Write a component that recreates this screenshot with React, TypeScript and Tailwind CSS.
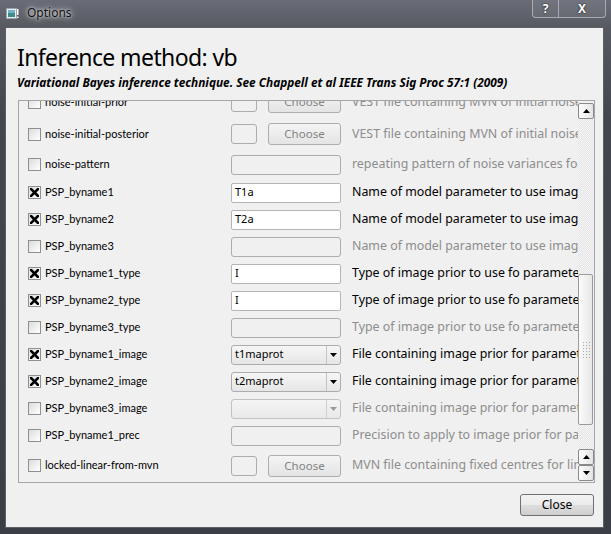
import React from "react";

type Ctrl = "choose" | "input" | "combo";
type Row = {
  label: string;
  checked: boolean;
  ctrl: Ctrl;
  value?: string;
  desc: string;
  enabled: boolean;
  h: string;
};

const rows: Row[] = [
  { label: "noise-initial-prior", checked: false, ctrl: "choose", desc: "VEST file containing MVN of initial noise prior", enabled: false, h: "h-[32px]" },
  { label: "noise-initial-posterior", checked: false, ctrl: "choose", desc: "VEST file containing MVN of initial noise posterior", enabled: false, h: "h-[32px]" },
  { label: "noise-pattern", checked: false, ctrl: "input", desc: "repeating pattern of noise variances for each point", enabled: false, h: "h-[29px]" },
  { label: "PSP_byname1", checked: true, ctrl: "input", value: "T1a", desc: "Name of model parameter to use image prior", enabled: true, h: "h-[27px]" },
  { label: "PSP_byname2", checked: true, ctrl: "input", value: "T2a", desc: "Name of model parameter to use image prior", enabled: true, h: "h-[27px]" },
  { label: "PSP_byname3", checked: false, ctrl: "input", desc: "Name of model parameter to use image prior", enabled: false, h: "h-[27px]" },
  { label: "PSP_byname1_type", checked: true, ctrl: "input", value: "I", desc: "Type of image prior to use fo parameter 1", enabled: true, h: "h-[27px]" },
  { label: "PSP_byname2_type", checked: true, ctrl: "input", value: "I", desc: "Type of image prior to use fo parameter 2", enabled: true, h: "h-[27px]" },
  { label: "PSP_byname3_type", checked: false, ctrl: "input", desc: "Type of image prior to use fo parameter 3", enabled: false, h: "h-[27px]" },
  { label: "PSP_byname1_image", checked: true, ctrl: "combo", value: "t1maprot", desc: "File containing image prior for parameter 1", enabled: true, h: "h-[27px]" },
  { label: "PSP_byname2_image", checked: true, ctrl: "combo", value: "t2maprot", desc: "File containing image prior for parameter 2", enabled: true, h: "h-[27px]" },
  { label: "PSP_byname3_image", checked: false, ctrl: "combo", desc: "File containing image prior for parameter 3", enabled: false, h: "h-[27px]" },
  { label: "PSP_byname1_prec", checked: false, ctrl: "input", desc: "Precision to apply to image prior for parameter 1", enabled: false, h: "h-[27px]" },
  { label: "locked-linear-from-mvn", checked: false, ctrl: "choose", desc: "MVN file containing fixed centres for linear regressors", enabled: false, h: "h-[33px]" },
];

function Check({ checked }: { checked: boolean }) {
  return (
    <span className="w-[13px] h-[13px] shrink-0 border border-[#8e8f8f] bg-[linear-gradient(135deg,#dcdcdc,#ffffff)] flex items-center justify-center">
      {checked && (
        <svg width="9" height="9" viewBox="0 0 9 9">
          <path d="M1 1L8 8M8 1L1 8" stroke="#000" strokeWidth="2.6" strokeLinecap="square" />
        </svg>
      )}
    </span>
  );
}

function Tri({ color = "#000", up = false }: { color?: string; up?: boolean }) {
  return (
    <svg width="7" height="4" viewBox="0 0 7 4">
      <path d={up ? "M0 4H7L3.5 0Z" : "M0 0H7L3.5 4Z"} fill={color} />
    </svg>
  );
}

function Control({ row }: { row: Row }) {
  if (row.ctrl === "choose") {
    return (
      <div className="w-[110px] flex items-center">
        <div className="w-[26px] h-[20px] rounded-[3px] border border-[#adadad] bg-[#f0f0f0]" />
        <div className="ml-[11px] w-[73px] h-[22px] rounded-[3px] border border-[#adadad] bg-[linear-gradient(#f4f4f4,#e4e4e4)] flex items-center justify-center text-[#838383] text-[11.5px]">
          Choose
        </div>
      </div>
    );
  }
  if (row.ctrl === "combo") {
    return (
      <div
        className={
          row.enabled
            ? "w-[110px] h-[20px] rounded-[3px] border border-[#acacac] bg-[linear-gradient(#f6f6f6,#e6e6e6)] flex items-center text-black text-[11px]"
            : "w-[110px] h-[20px] rounded-[3px] border border-[#c2c2c2] bg-[linear-gradient(#f4f4f4,#e9e9e9)] flex items-center text-black text-[11px]"
        }
      >
        <span className="flex-1 pl-[3px]">{row.value ?? ""}</span>
        <span
          className={
            row.enabled
              ? "w-[14px] h-full border-l border-[#c4c4c4] flex items-center justify-center"
              : "w-[14px] h-full border-l border-[#d0d0d0] flex items-center justify-center"
          }
        >
          <Tri color={row.enabled ? "#000" : "#9a9a9a"} />
        </span>
      </div>
    );
  }
  return row.enabled ? (
    <div className="w-[110px] h-[20px] rounded-[2px] border border-[#b5b5b5] bg-white flex items-center pl-[3px] text-black text-[11px]">
      {row.value}
    </div>
  ) : (
    <div className="w-[110px] h-[20px] rounded-[3px] border border-[#adadad] bg-[#f0f0f0]" />
  );
}

function ScrollBtn({ up }: { up: boolean }) {
  return (
    <div className="w-[16px] h-[16px] shrink-0 rounded-[2px] border border-[#8a8a8a] bg-[linear-gradient(90deg,#fdfdfd,#e4e4e4)] flex items-center justify-center">
      <Tri up={up} />
    </div>
  );
}

function Track({ h }: { h: string }) {
  return (
    <div
      className={`${h} w-[16px] bg-[image:repeating-conic-gradient(#f7f7f7_0%_25%,#e3e3e3_0%_50%)] bg-[length:2px_2px]`}
    />
  );
}

export default function App() {
  return (
    <div
      className="w-[611px] h-[534px] overflow-hidden flex flex-col bg-[linear-gradient(180deg,#6a6d78_0px,#56595f_28px,#43464c_120px,#3b3e44_534px)]"
      style={{ fontFamily: "'Noto Sans', sans-serif" }}
    >
      {/* Title bar */}
      <div className="h-[27px] shrink-0 flex items-start pl-[6px] pr-[5px]">
        <div className="mt-[7px] flex items-center">
          <svg width="13" height="11" viewBox="0 0 13 11">
            <rect x="0.5" y="0.5" width="10" height="10" fill="#e8eef2" stroke="#9aa4aa" />
            <rect x="2" y="2" width="7" height="7" fill="#3d8c8a" />
            <rect x="2" y="2" width="7" height="3" fill="#6fb2c9" />
            <rect x="11" y="1" width="1.5" height="6" fill="#ffffff" />
            <rect x="11" y="8.5" width="1.5" height="1.5" fill="#ffffff" />
          </svg>
          <span className="ml-[8px] text-[12px] leading-[12px] text-[#111] [text-shadow:0_0_6px_rgba(255,255,255,0.9),0_0_3px_rgba(255,255,255,0.8)]">
            Options
          </span>
        </div>
        <div className="ml-auto flex">
          <div className="w-[27px] h-[18px] border border-t-0 border-[#a7abb1] rounded-bl-[4px] bg-[rgba(255,255,255,0.06)] flex items-center justify-center text-white font-bold text-[12px] leading-none [text-shadow:0_0_2px_#000]">
            ?
          </div>
          <div className="w-[47px] h-[18px] border border-t-0 border-l-0 border-[#a7abb1] rounded-br-[4px] bg-[rgba(255,255,255,0.06)] flex items-center justify-center text-white font-bold text-[12px] leading-none [text-shadow:0_0_2px_#000]">
            X
          </div>
        </div>
      </div>

      {/* Client area */}
      <div className="ml-[5px] w-[599px] h-[501px] shrink-0 border border-[#5d6066] bg-[#f0f0f0] flex flex-col pl-[11px] pr-[8px] pt-[10px] pb-[11px]">
        <div className="h-[36px] text-[23px] tracking-[-0.6px] leading-[36px] text-black whitespace-nowrap pt-[1px]">
          Inference method: vb
        </div>
        <div className="h-[16px] text-[11.85px] leading-[16px] font-bold italic text-black whitespace-nowrap">
          Variational Bayes inference technique. See Chappell et al IEEE Trans Sig Proc 57:1 (2009)
        </div>

        {/* Scroll area */}
        <div className="mt-[10px] ml-[1px] w-[577px] h-[383px] border border-[#a5a5a5] flex overflow-hidden">
          <div className="flex-1 overflow-hidden">
            <div className="-mt-[15px]">
              {rows.map((r) => (
                <div key={r.label} className={`${r.h} flex items-center pl-[9px]`}>
                  <Check checked={r.checked} />
                  <span className="ml-[4px] w-[186px] text-[11px] text-black whitespace-nowrap" style={{ fontFamily: "Lato, sans-serif" }}>
                    {r.label}
                  </span>
                  <Control row={r} />
                  <span
                    className={
                      r.enabled
                        ? "ml-[11px] flex-1 overflow-hidden whitespace-nowrap text-[12.4px] text-black"
                        : "ml-[11px] flex-1 overflow-hidden whitespace-nowrap text-[12.4px] text-[#8d8d8d]"
                    }
                  >
                    {r.desc}
                  </span>
                </div>
              ))}
            </div>
          </div>
          {/* Scrollbar */}
          <div className="w-[16px] flex flex-col pt-[2px]">
            <ScrollBtn up />
            <Track h="h-[155px]" />
            <div className="w-[15px] h-[151px] rounded-[2px] border border-[#9a9a9a] bg-[linear-gradient(90deg,#fbfbfb,#e7e7e7)] flex items-center justify-center">
              <div className="w-[8px] h-[18px] bg-[image:radial-gradient(#a9a9a9_0.8px,transparent_1px)] bg-[length:3px_3px]" />
            </div>
            <Track h="h-[24px]" />
            <ScrollBtn up />
            <ScrollBtn up={false} />
          </div>
        </div>

        <div className="mt-[11px] flex justify-end pr-[1px]">
          <div className="w-[74px] h-[22px] rounded-[3px] border border-[#707070] bg-[linear-gradient(#f3f3f3_0%,#ebebeb_50%,#dddddd_51%,#cfcfcf_100%)] flex items-center justify-center text-[12px] text-black">
            Close
          </div>
        </div>
      </div>
    </div>
  );
}
